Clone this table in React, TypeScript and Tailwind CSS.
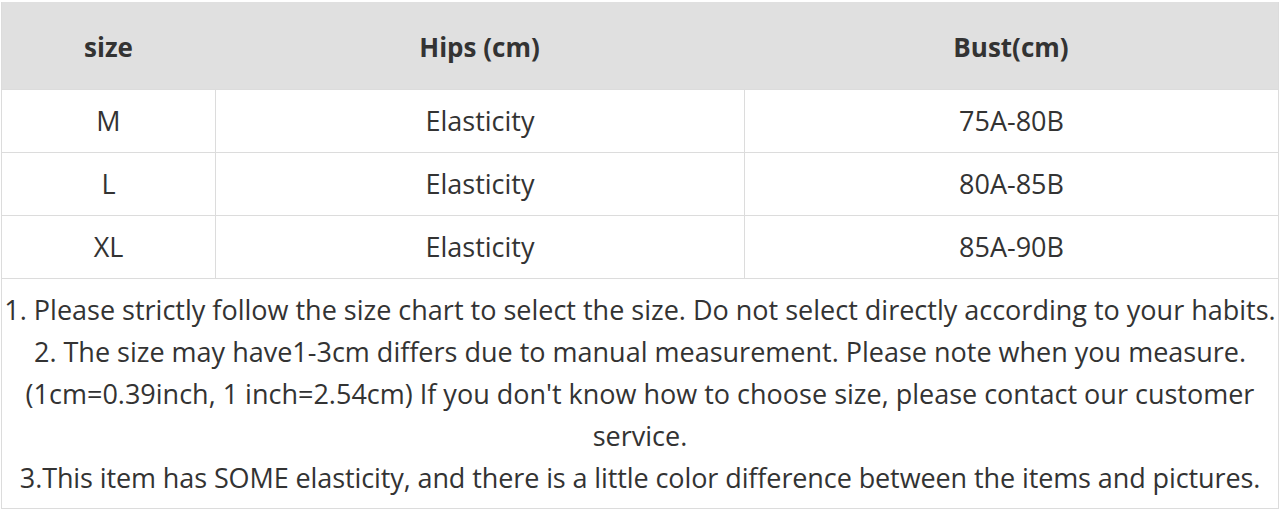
const rows = [
  { size: "M", hips: "Elasticity", bust: "75A-80B" },
  { size: "L", hips: "Elasticity", bust: "80A-85B" },
  { size: "XL", hips: "Elasticity", bust: "85A-90B" },
];

export default function App() {
  return (
    <div className="w-[1280px] h-[512px] bg-white pt-[2px] text-[#333] font-['Open_Sans',sans-serif]">
      <div className="mx-[1px] border-x border-b border-[#dcdcdc]">
        {/* header */}
        <div className="grid grid-cols-[213px_529px_1fr] h-[87px] pt-[3px] bg-[#e0e0e0] text-[26px] font-bold items-center text-center">
          <div>size</div>
          <div>Hips (cm)</div>
          <div>Bust(cm)</div>
        </div>

        {/* body */}
        {rows.map((r) => (
          <div
            key={r.size}
            className="grid grid-cols-[213px_529px_1fr] h-[63px] border-t border-[#dcdcdc] text-[27px] text-center"
          >
            <div className="flex items-center justify-center">{r.size}</div>
            <div className="flex items-center justify-center border-l border-[#dcdcdc]">{r.hips}</div>
            <div className="flex items-center justify-center border-l border-[#dcdcdc]">{r.bust}</div>
          </div>
        ))}

        {/* notes */}
        <div className="border-t border-[#dcdcdc] h-[230px] pt-[10px] text-[27px] leading-[42px] text-center whitespace-nowrap">
          <p>1. Please strictly follow the size chart to select the size. Do not select directly according to your habits.</p>
          <p>2. The size may have1-3cm differs due to manual measurement. Please note when you measure.</p>
          <p>
            (1cm=0.39inch, 1 inch=2.54cm) If you don't know how to choose size, please contact our customer
            <br />
            service.
          </p>
          <p className="tracking-[-0.1px]">3.This item has SOME elasticity, and there is a little color difference between the items and pictures.</p>
        </div>
      </div>
    </div>
  );
}
